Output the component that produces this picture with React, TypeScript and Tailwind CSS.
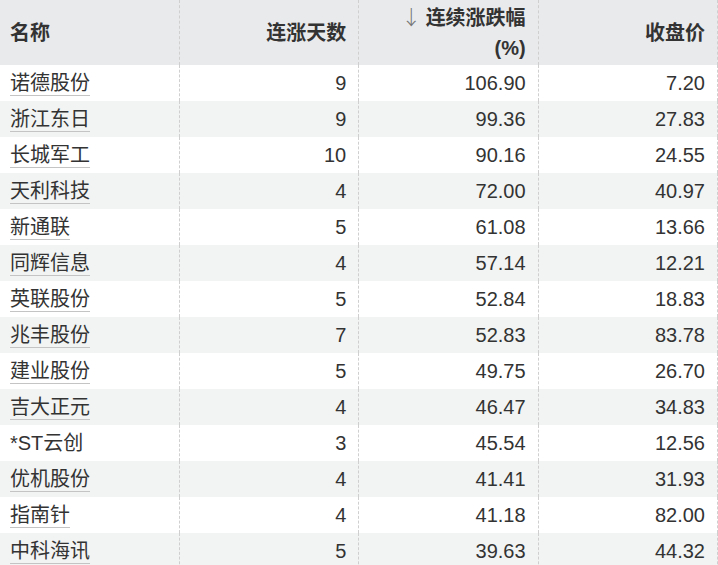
const rows: [string, string, string, string, boolean][] = [
  ["诺德股份", "9", "106.90", "7.20", true],
  ["浙江东日", "9", "99.36", "27.83", true],
  ["长城军工", "10", "90.16", "24.55", true],
  ["天利科技", "4", "72.00", "40.97", true],
  ["新通联", "5", "61.08", "13.66", true],
  ["同辉信息", "4", "57.14", "12.21", true],
  ["英联股份", "5", "52.84", "18.83", true],
  ["兆丰股份", "7", "52.83", "83.78", true],
  ["建业股份", "5", "49.75", "26.70", true],
  ["吉大正元", "4", "46.47", "34.83", true],
  ["*ST云创", "3", "45.54", "12.56", false],
  ["优机股份", "4", "41.41", "31.93", true],
  ["指南针", "4", "41.18", "82.00", true],
  ["中科海讯", "5", "39.63", "44.32", true],
];

const cell = "border-r border-dashed border-[#cfcfcf] px-3";

export default function App() {
  return (
    <div className="w-[718px] overflow-hidden bg-white font-['Liberation_Sans','Noto_Sans_CJK_SC',sans-serif] text-[20px] text-[#333]">
      <table className="w-[718px] table-fixed border-collapse">
        <thead>
          <tr className="h-[65px] bg-[#e9eaec] font-bold leading-[30px]">
            <th className={`${cell} pl-[10px] text-left`}>名称</th>
            <th className={`${cell} text-right`}>连涨天数</th>
            <th className={`${cell} text-right`}>
              <span className="font-['Noto_Sans_CJK_SC',sans-serif] font-light text-[#777]">↓ </span>连续涨跌幅
              <br />
              (%)
            </th>
            <th className={`${cell} text-right`}>收盘价</th>
          </tr>
        </thead>
        <tbody>
          {rows.map(([name, days, pct, close, link], i) => (
            <tr key={name} className={`h-9 ${i % 2 ? "bg-[#f2f3f3]" : "bg-white"}`}>
              <td className={`${cell} pl-[10px] text-left`}>
                <span className={`inline-block leading-[23px] ${link ? "border-b border-[#c4c4c4]" : ""}`}>
                  {name}
                </span>
              </td>
              <td className={`${cell} text-right`}>{days}</td>
              <td className={`${cell} text-right`}>{pct}</td>
              <td className={`${cell} text-right`}>{close}</td>
            </tr>
          ))}
        </tbody>
      </table>
    </div>
  );
}
